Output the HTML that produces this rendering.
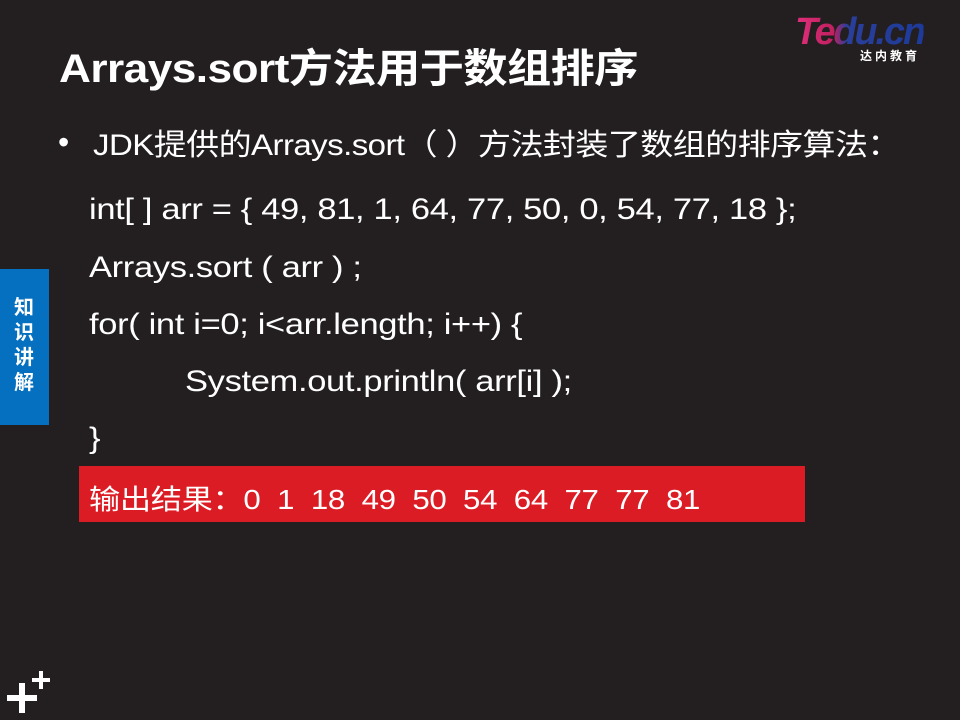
<!DOCTYPE html>
<html><head><meta charset="utf-8"><style>
body{margin:0;width:960px;height:720px;background:#231f20;position:relative;overflow:hidden;font-family:"Liberation Sans","Noto Sans CJK SC",sans-serif;color:#fff}
.a{position:absolute;white-space:nowrap;transform-origin:0 0}
h1{position:absolute;left:59px;top:36px;margin:0;font-size:40px;font-weight:bold;letter-spacing:-0.5px;transform:scaleX(1.105);transform-origin:0 0;white-space:nowrap}
.code{font-size:30px;letter-spacing:-0.3px;transform:scaleX(1.15)}
</style></head><body>
<div class="a" style="left:795px;top:11px;font:italic bold 38px 'Liberation Sans',sans-serif;letter-spacing:-2px;transform:scaleX(0.99);background:linear-gradient(90deg,#e0307a 0%,#c02060 30%,#2a3f9a 40%,#1d3a9a 100%);-webkit-background-clip:text;color:transparent">Tedu.cn</div>
<div class="a" style="left:860px;top:47px;font-size:12px;font-weight:bold;letter-spacing:3px">达内教育</div>
<h1>Arrays.sort方法用于数组排序</h1>
<div class="a" style="left:58px;top:124px;font-size:32px">•</div>
<div class="a" style="left:93px;top:120px;font-size:30px;letter-spacing:-0.5px;transform:scaleX(1.1)">JDK提供的Arrays.sort（ ）方法封装了数组的排序算法：</div>
<div class="a code" style="left:89px;top:193px">int[ ] arr = { 49, 81, 1, 64, 77, 50, 0, 54, 77, 18 };</div>
<div class="a code" style="left:89px;top:251px">Arrays.sort ( arr ) ;</div>
<div class="a code" style="left:89px;top:308px">for( int i=0; i&lt;arr.length; i++) {</div>
<div class="a code" style="left:185px;top:365px">System.out.println( arr[i] );</div>
<div class="a code" style="left:89px;top:422px">}</div>
<div class="a" style="left:79px;top:466px;width:726px;height:56px;background:#dc1c24"></div>
<div class="a" style="left:89px;top:478px;font-size:28px;letter-spacing:-0.3px;transform:scaleX(1.115)">输出结果：0&nbsp; 1&nbsp; 18&nbsp; 49&nbsp; 50&nbsp; 54&nbsp; 64&nbsp; 77&nbsp; 77&nbsp; 81</div>
<div class="a" style="left:0;top:269px;width:49px;height:156px;background:#0570c0"></div>
<div class="a" style="left:13px;top:296px;width:22px;font-size:20px;font-weight:bold;line-height:25px;white-space:normal;text-align:center">知识讲解</div>
<div class="a" style="left:7px;top:695px;width:30px;height:6px;background:#fff"></div>
<div class="a" style="left:19px;top:683px;width:6px;height:30px;background:#fff"></div>
<div class="a" style="left:32px;top:678px;width:18px;height:4px;background:#fff"></div>
<div class="a" style="left:39px;top:671px;width:4px;height:18px;background:#fff"></div>
</body></html>
